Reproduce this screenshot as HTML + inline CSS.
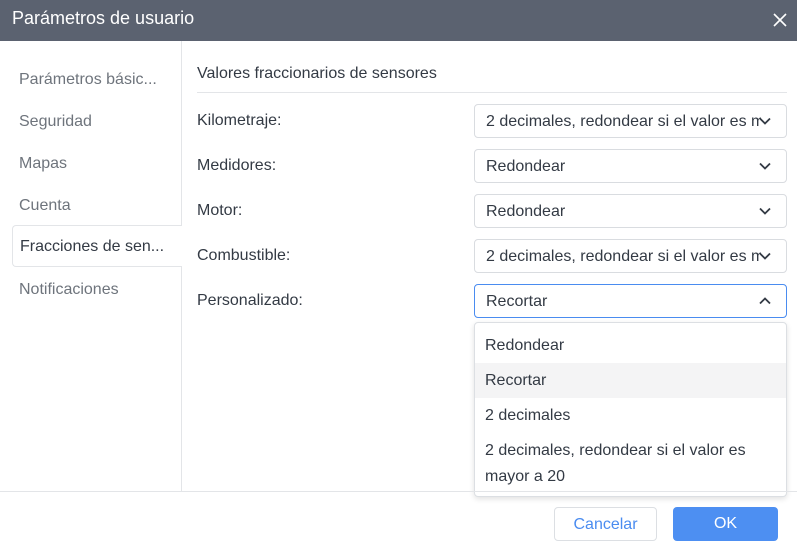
<!DOCTYPE html><html><head><style>
*{box-sizing:border-box;margin:0;padding:0}
body{width:797px;height:552px;position:relative;background:#fff;font-family:"Liberation Sans",sans-serif;color:#333a44;overflow:hidden;font-size:16px}
.hdr{position:absolute;left:0;top:0;width:797px;height:41px;background:#5b6270;color:#fff;font-size:18px;padding:8px 0 0 12px}
.x{position:absolute;right:10px;top:13px}
.vline{position:absolute;left:181px;top:41px;width:1px;height:450px;background:#e3e5e8}
.nav{position:absolute;left:19px;color:#6e747c;font-size:16px}
.act{position:absolute;left:12px;top:225px;width:170px;height:42px;border:1px solid #e3e5e8;border-right:none;border-radius:4px 0 0 4px;background:#fff;color:#333a44;padding:12px 0 0 7px}
.title{position:absolute;left:197px;top:65px;font-size:16px}
.tl{position:absolute;left:197px;top:92px;width:590px;height:1px;background:#e3e5e8}
.lab{position:absolute;left:197px;font-size:16px}
.sel{position:absolute;left:474px;width:313px;height:34px;border:1px solid #d9dce0;border-radius:4px;background:#fff}
.t{position:absolute;left:11px;top:8px;width:275px;height:20px;white-space:nowrap;overflow:hidden}
.c{position:absolute;left:284px;top:12px}
.dd{position:absolute;left:474px;top:322px;width:313px;height:175px;border:1px solid #dcdfe3;border-radius:4px;background:#fff;box-shadow:0 2px 6px rgba(0,0,0,.12)}
.op{position:absolute;left:10px;font-size:16px}
.foot{position:absolute;left:0;top:491px;width:797px;height:1px;background:#e3e5e8}
.btn{position:absolute;top:507px;height:34px;border-radius:4px;text-align:center;padding-top:8px;font-size:16px}
</style></head><body>
<div class="hdr">Parámetros de usuario</div>
<svg class="x" width="14" height="14" viewBox="0 0 14 14"><path d="M1 1L13 13M13 1L1 13" stroke="#fff" stroke-width="1.6"/></svg>
<div class="vline"></div>
<div class="nav" style="top:71px">Parámetros básic...</div>
<div class="nav" style="top:113px">Seguridad</div>
<div class="nav" style="top:155px">Mapas</div>
<div class="nav" style="top:197px">Cuenta</div>
<div class="act">Fracciones de sen...</div>
<div class="nav" style="top:281px">Notificaciones</div>
<div class="title">Valores fraccionarios de sensores</div>
<div class="tl"></div>
<div class="lab" style="top:112px">Kilometraje:</div>
<div class="lab" style="top:157px">Medidores:</div>
<div class="lab" style="top:202px">Motor:</div>
<div class="lab" style="top:247px">Combustible:</div>
<div class="lab" style="top:292px">Personalizado:</div>
<div class="sel" style="top:104px"><div class="t">2 decimales, redondear si el valor es mayor</div><svg class="c" width="12" height="8" viewBox="0 0 12 8"><path d="M1 1.5L6 6.5L11 1.5" fill="none" stroke="#333a44" stroke-width="1.8"/></svg></div>
<div class="sel" style="top:149px"><div class="t">Redondear</div><svg class="c" width="12" height="8" viewBox="0 0 12 8"><path d="M1 1.5L6 6.5L11 1.5" fill="none" stroke="#333a44" stroke-width="1.8"/></svg></div>
<div class="sel" style="top:194px"><div class="t">Redondear</div><svg class="c" width="12" height="8" viewBox="0 0 12 8"><path d="M1 1.5L6 6.5L11 1.5" fill="none" stroke="#333a44" stroke-width="1.8"/></svg></div>
<div class="sel" style="top:239px"><div class="t">2 decimales, redondear si el valor es mayor</div><svg class="c" width="12" height="8" viewBox="0 0 12 8"><path d="M1 1.5L6 6.5L11 1.5" fill="none" stroke="#333a44" stroke-width="1.8"/></svg></div>
<div class="sel" style="top:284px;border-color:#4a8cf0"><div class="t">Recortar</div><svg class="c" width="12" height="8" viewBox="0 0 12 8"><path d="M1 6.5L6 1.5L11 6.5" fill="none" stroke="#333a44" stroke-width="1.8"/></svg></div>
<div class="dd">
<div style="position:absolute;left:0;top:40px;width:311px;height:35px;background:#f4f4f5"></div>
<div class="op" style="top:14px">Redondear</div>
<div class="op" style="top:49px">Recortar</div>
<div class="op" style="top:84px">2 decimales</div>
<div class="op" style="top:115px;line-height:26px">2 decimales, redondear si el valor es<br>mayor a 20</div>
</div>
<div class="foot"></div>
<div class="btn" style="left:554px;width:103px;border:1px solid #dcdfe3;color:#4a8cf0">Cancelar</div>
<div class="btn" style="left:673px;width:105px;background:#4d8ff2;color:#fff">OK</div>
</body></html>
